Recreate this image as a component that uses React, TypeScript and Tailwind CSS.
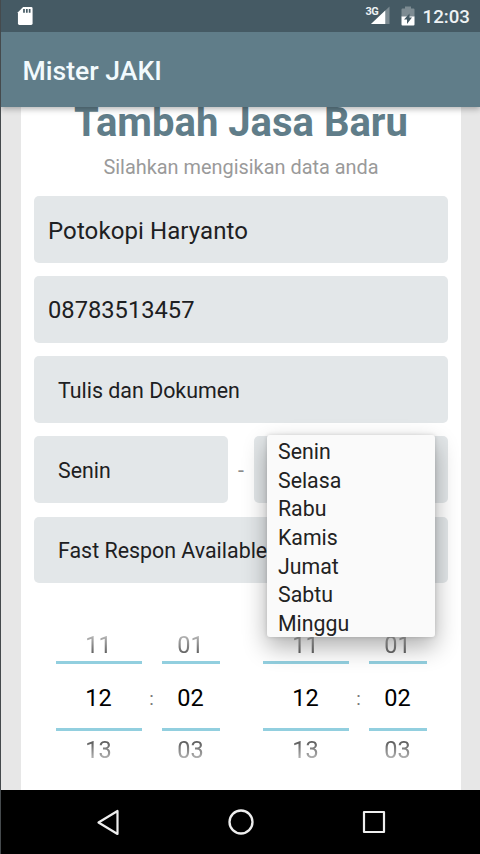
import { useState } from 'react';
import clsx from 'clsx';

const days = ['Senin', 'Selasa', 'Rabu', 'Kamis', 'Jumat', 'Sabtu', 'Minggu'];

function StatusBar() {
    return (
        <div className="flex h-8 items-center bg-[#455a64] pl-4 pr-[10px]">
            {/* sd card */}
            <svg width="17" height="20" viewBox="0 0 18 20" className="-mt-px">
                <path d="M6.500 .5h8.500a1.500 1.500 0 0 1 1.500 1.500v16a1.500 1.500 0 0 1-1.500 1.500H2.500A1.500 1.500 0 0 1 1 18V6z" fill="#fff" />
                <path d="M6.500 2.500h1.800v4H6.500zM9.500 2.500h1.800v4H9.500zM12.500 2.500h1.800v4h-1.800z" fill="#455a64" />
            </svg>
            <div className="ml-auto flex items-center text-[#eef2f4]">
                <span className="mb-[9px] text-[11px] font-bold leading-none tracking-[-0.6px]">3G</span>
                <svg width="19" height="19" viewBox="0 0 20 19" className="-ml-[7px]">
                    <path d="M19.500 0v18.500H0z" fill="#7d8b92" />
                    <path d="M15 4.300v14.200H0z" fill="#fff" />
                </svg>
                {/* battery, half charged */}
                <svg width="14" height="20" viewBox="0 0 14 20" className="ml-[10.500px]">
                    <path d="M4 2.500V.5h6v2h2.500a1 1 0 0 1 1 1V11H.5V3.500a1 1 0 0 1 1-1z" fill="#7d8b92" />
                    <path d="M.5 10.500h13v8a1 1 0 0 1-1 1h-11a1 1 0 0 1-1-1z" fill="#fff" />
                    <path d="M8.500 7.500v4h2.500L6 18v-4.500H3z" fill="#455a64" />
                </svg>
                <span className="ml-[8px] mt-[2px] text-[18.700px] font-medium leading-none">12:03</span>
            </div>
        </div>
    );
}

function Field({ children, className }: { children?: React.ReactNode; className?: string }) {
    return (
        <div className={clsx('flex h-[66.700px] items-center rounded-[5px] bg-[#e3e7e9] pt-[2.500px] text-[#1d2022]', className)}>{children}</div>
    );
}

function NumberPicker({ values, className }: { values: string[]; className: string }) {
    return (
        <div className={clsx('flex flex-col text-center text-[23.500px] leading-[28px]', className)}>
            <div className="mb-[2px] h-[28px] text-[#555] [mask-image:linear-gradient(to_bottom,rgba(0,0,0,.45)_20%,#000_90%)]">{values[0]}</div>
            <div className="flex h-[70px] items-center justify-center border-y-[3px] border-[#92cfdf] pt-[3px] text-black">{values[1]}</div>
            <div className="mt-[5px] h-[28px] text-[#555] [mask-image:linear-gradient(to_bottom,#000_15%,rgba(0,0,0,.45)_80%)]">{values[2]}</div>
        </div>
    );
}

function TimePicker() {
    return (
        <div className="flex items-center">
            <NumberPicker values={['11', '12', '13']} className="w-[86px]" />
            <span className="w-5 pt-[2px] text-center text-[18.700px] text-[#777]">:</span>
            <NumberPicker values={['01', '02', '03']} className="w-[58px]" />
        </div>
    );
}

export default function App() {
    const [startDay, setStartDay] = useState('Senin');

    return (
        <div className="flex h-[854px] w-[480px] flex-col overflow-hidden border-l border-[#454a4d] bg-[#e7e7e7] font-[Roboto,sans-serif]">
            <div className="relative z-10 shadow-[0_2px_6px_rgba(0,0,0,0.3)]">
                <StatusBar />
                <header className="flex h-[74.500px] items-center bg-[#607d89] pl-[21.500px] pt-1">
                    <h1 className="text-[26.600px] font-medium text-[#f2fafd]">Mister JAKI</h1>
                </header>
            </div>

            <main className="min-h-0 flex-1 pl-5 pr-[19px]">
                <div className="h-full bg-white px-[13px]">
                    <div className="flex h-[89.700px] flex-col text-center">
                        <h2 className="-mt-[9px] whitespace-nowrap text-[40px] font-bold leading-[50px] text-[#607d89]">Tambah Jasa Baru</h2>
                        <p className="mt-[8px] text-[19.900px] leading-6 text-[#9a9a9a]">Silahkan mengisikan data anda</p>
                    </div>

                    <div className="flex flex-col gap-[13.400px]">
                        <Field className="px-[14px] text-[24px] tracking-[0.1px]">Potokopi Haryanto</Field>
                        <Field className="px-[14px] text-[23.700px]">08783513457</Field>
                        <Field className="px-6 text-[21.400px]">Tulis dan Dokumen</Field>
                        <div className="relative flex items-center justify-between">
                            <Field className="w-[194px] px-6 text-[21.300px]">{startDay}</Field>
                            <span className="pt-[3px] text-[21.300px] text-[#8c8c8c]">-</span>
                            <Field className="w-[194px] px-6 text-[21.300px]" />
                            <ul className="absolute -top-[1.500px] left-[233px] z-10 h-[202.500px] w-[168px] rounded-[3px] bg-[#fafafa] pt-[3px] shadow-[0_10px_24px_rgba(0,0,0,0.32),0_0_4px_rgba(0,0,0,0.15)]">
                                {days.map((day) => (
                                    <li
                                        key={day}
                                        onClick={() => setStartDay(day)}
                                        className="h-[28.700px] pl-[11px] text-[21.300px] leading-[28.700px] text-[#222]"
                                    >
                                        {day}
                                    </li>
                                ))}
                            </ul>
                        </div>
                        <Field className="px-6 text-[21.400px]">Fast Respon Available</Field>
                    </div>

                    <div className="mt-[48px] flex justify-between pl-[21.500px] pr-[21.500px]">
                        <TimePicker />
                        <TimePicker />
                    </div>
                </div>
            </main>

            <nav className="flex h-16 items-center justify-around bg-black pl-[42px] pr-[40px]">
                <svg width="26" height="28" viewBox="0 0 26 28" fill="none" stroke="#eee" strokeWidth="2.200" strokeLinejoin="round">
                    <path d="M21.500 3v23L2.500 14.500z" />
                </svg>
                <svg width="28" height="28" viewBox="0 0 28 28" fill="none" stroke="#eee" strokeWidth="2.300">
                    <circle cx="14" cy="14" r="11.500" />
                </svg>
                <svg width="28" height="28" viewBox="0 0 28 28" fill="none" stroke="#eee" strokeWidth="2.200" strokeLinejoin="round">
                    <rect x="4" y="4" width="20" height="20" />
                </svg>
            </nav>
        </div>
    );
}
